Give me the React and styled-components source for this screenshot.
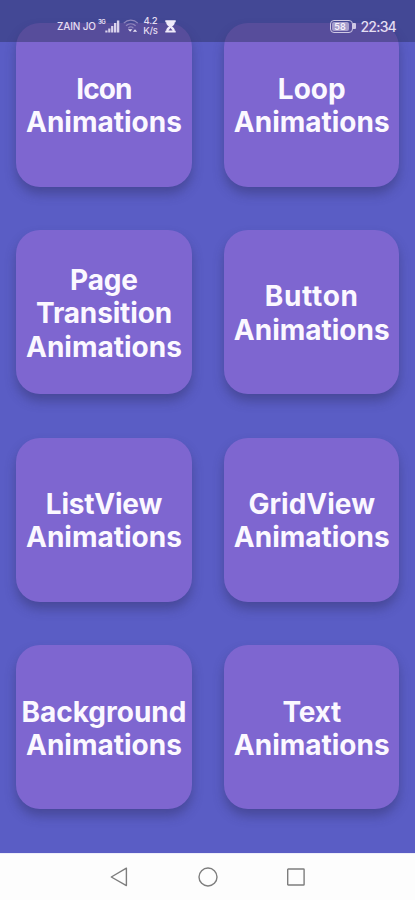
import React from "react";
import styled, { createGlobalStyle } from "styled-components";

const cards = [
  { title: "Icon", spacing: -0.9 },
  { title: "Loop" },
  { title: "Page Transition", spacing: -0.15 },
  { title: "Button", spacing: 0.7 },
  { title: "ListView", spacing: -0.2 },
  { title: "GridView" },
  { title: "Background" },
  { title: "Text", spacing: -0.2 },
];

const App = () => {
  return (
    <Screen>
      <GlobalStyle />
      <StatusBar>
        <StatusGroup>
          <Carrier>ZAIN JO</Carrier>
          <Network>3G</Network>
          <SignalIcon />
          <WifiIcon />
          <Speed>
            <span>4.2</span>
            <span>K/s</span>
          </Speed>
          <HourglassIcon />
        </StatusGroup>
        <StatusGroup>
          <Battery>
            <BatteryLevel>58</BatteryLevel>
          </Battery>
          <Clock>22:34</Clock>
        </StatusGroup>
      </StatusBar>
      <Grid>
        {cards.map(({ title, spacing }) => (
          <Card key={title}>
            {title.split(" ").map((word) => (
              <Line key={word} $spacing={spacing}>
                {word}
              </Line>
            ))}
            <Line>Animations</Line>
          </Card>
        ))}
      </Grid>
      <NavBar>
        <svg width="20" height="20" viewBox="0 0 20 20">
          <path d="M1.3 10 16.4 1.2V18.6Z" />
        </svg>
        <svg width="20" height="20" viewBox="0 0 20 20">
          <circle cx="10" cy="10" r="9" />
        </svg>
        <svg width="20" height="20" viewBox="0 0 20 20">
          <rect x="1.7" y="2" width="16.4" height="16" rx="0.6" />
        </svg>
      </NavBar>
    </Screen>
  );
};

const SignalIcon = () => (
  <svg width="15" height="13" viewBox="0 0 15 13" fill="#d9d2ec">
    <rect x="0.3" y="10.5" width="2.2" height="2" />
    <rect x="3.2" y="8.5" width="2.2" height="4" />
    <rect x="6.1" y="6" width="2.2" height="6.5" />
    <rect x="9" y="3" width="2.3" height="9.5" />
    <rect x="11.9" y="0.5" width="2.4" height="12" />
  </svg>
);

const WifiIcon = () => (
  <WifiSvg width="16" height="14" viewBox="0 0 16 14" fill="none">
    <g stroke="#8f86bd" strokeWidth="1.2">
      <path d="M0.8 4.2C4.8 0.2 10.8 0.2 14.8 4.2" />
      <path d="M3 6.8C5.8 4.2 9.8 4.2 12.6 6.8" />
      <path d="M5.2 9.2C6.8 7.7 8.8 7.7 10.4 9.2" />
    </g>
    <path d="M5 10.2H9.4L7.2 12.8ZM9.8 12.8H14.2L12 10.2Z" fill="#e4def2" />
  </WifiSvg>
);

const HourglassIcon = () => (
  <svg width="11" height="13" viewBox="0 0 11 13">
    <path
      d="M0.3 0.3H10.7V2.2H9.8C9.8 4.4 8.6 5.4 7 6.4C8.6 7.4 9.8 8.4 9.8 10.7H10.7V12.6H0.3V10.7H1.2C1.2 8.4 2.4 7.4 4 6.4C2.4 5.4 1.2 4.4 1.2 2.2H0.3Z"
      fill="#f0ebfa"
    />
    <path d="M5.5 8 7.6 10.6H3.4Z" fill="#5b4b98" />
  </svg>
);

const GlobalStyle = createGlobalStyle`
  body {
    margin: 0;
  }
`;

const Screen = styled.main`
  position: relative;
  display: flex;
  flex-direction: column;
  width: 415px;
  height: 900px;
  overflow: hidden;
  background: #5a5dc5;
  font-family: "Inter", sans-serif;
`;

const StatusBar = styled.header`
  position: absolute;
  inset: 0 0 auto;
  z-index: 1;
  display: flex;
  justify-content: space-between;
  box-sizing: border-box;
  height: 41.5px;
  padding: 11px 19px 0 57px;
  background: rgba(38, 44, 86, 0.43);
  color: #e4def2;
`;

const StatusGroup = styled.div`
  display: flex;
  align-items: center;
  height: 30px;
`;

const Carrier = styled.span`
  width: 41px;
  font-size: 10px;
  font-weight: 500;
  letter-spacing: -0.15px;
  white-space: nowrap;
`;

const Network = styled.span`
  width: 7px;
  margin-bottom: 9px;
  font-size: 6px;
  font-weight: 700;
  letter-spacing: -0.5px;
`;

const WifiSvg = styled.svg`
  margin-left: 3px;
`;

const Speed = styled.span`
  display: flex;
  flex-direction: column;
  align-items: center;
  width: 23px;
  margin-right: 3px;
  font-size: 9.5px;
  font-weight: 500;
  line-height: 10px;
  letter-spacing: -0.2px;
`;

const Battery = styled.span`
  position: relative;
  display: flex;
  box-sizing: border-box;
  width: 23px;
  height: 13px;
  margin-right: 8px;
  padding: 1px;
  border: 1.5px solid #cfc8e4;
  border-radius: 4px;

  &::after {
    content: "";
    position: absolute;
    top: 2px;
    right: -4px;
    width: 3px;
    height: 6px;
    border-radius: 0 1px 1px 0;
    background: #cfc8e4;
  }
`;

const BatteryLevel = styled.span`
  flex: 1;
  margin-right: 2px;
  border-radius: 2px;
  background: #a69dcb;
  color: #f4f0fb;
  font-size: 9px;
  font-weight: 600;
  line-height: 9px;
  text-align: center;
`;

const Clock = styled.span`
  font-size: 14px;
  font-weight: 500;
  letter-spacing: -0.8px;
`;

const Grid = styled.div`
  display: grid;
  flex: 1;
  grid-template-columns: 175.5px 175.5px;
  grid-auto-rows: 164px;
  align-content: start;
  gap: 43.6px 32.3px;
  padding: 22.6px 16.2px 0;
`;

const Card = styled.section`
  display: flex;
  flex-direction: column;
  align-items: center;
  justify-content: center;
  box-sizing: border-box;
  padding-top: 3.4px;
  border-radius: 24px;
  background: #7e66d0;
  box-shadow: 0 7px 11px rgba(45, 45, 95, 0.42);
`;

const Line = styled.span`
  color: #fbf8ff;
  font-size: 28px;
  font-weight: 700;
  line-height: 33.4px;
  letter-spacing: ${(props) => props.$spacing || 0}px;
  white-space: nowrap;
`;

const NavBar = styled.nav`
  display: flex;
  align-items: center;
  justify-content: center;
  gap: 68px;
  box-sizing: border-box;
  height: 47px;
  border-top: 1px solid #eeeefa;
  background: #fdfdfd;

  svg {
    fill: none;
    stroke: #7d7d7d;
    stroke-width: 1.4;
    stroke-linejoin: round;
  }
`;

export default App;
